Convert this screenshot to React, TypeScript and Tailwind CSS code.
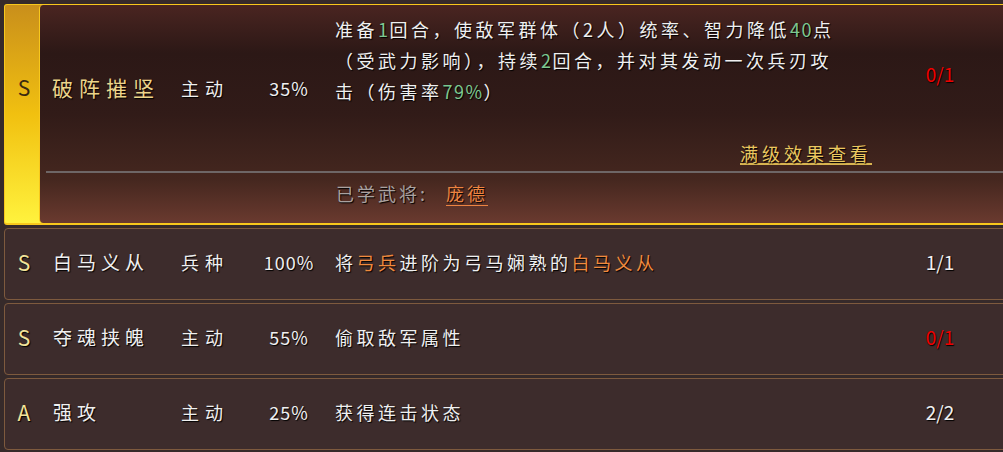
import React from "react";

const F = { fontFamily: '"Noto Sans CJK SC", "Noto Sans", sans-serif' };

const G = ({ children }: { children: React.ReactNode }) => (
  <span className="text-[#7cc890] tracking-[1.5px]">{children}</span>
);
const O = ({ children }: { children: React.ReactNode }) => (
  <span className="text-[#f08a3e]">{children}</span>
);

type Row = {
  grade: string;
  name: string;
  type: string;
  pct: string;
  desc: React.ReactNode;
  count: string;
  red: boolean;
};

const rows: Row[] = [
  {
    grade: "S",
    name: "白马义从",
    type: "兵种",
    pct: "100%",
    desc: (
      <>
        将<O>弓兵</O>进阶为弓马娴熟的<O>白马义从</O>
      </>
    ),
    count: "1/1",
    red: false,
  },
  { grade: "S", name: "夺魂挟魄", type: "主动", pct: "55%", desc: "偷取敌军属性", count: "0/1", red: true },
  { grade: "A", name: "强攻", type: "主动", pct: "25%", desc: "获得连击状态", count: "2/2", red: false },
];

const shadow = "[text-shadow:1px_1px_1px_#000]";

export default function App() {
  return (
    <div className="w-[1003px] h-[452px] overflow-hidden bg-[#362a2a]" style={F}>
      <div className="w-[1012px] pl-[4px] pt-[4px] flex flex-col gap-[3px]">
        {/* Highlighted card */}
        <div className="h-[221px] flex rounded-[3px] border border-b-2 border-[#f8c81c] bg-[linear-gradient(180deg,#c98f1b_0%,#f1c010_50%,#fff23d_100%)]">
          <div className="w-[34px] shrink-0 flex flex-col">
            <div className="h-[166px] flex items-center justify-center pl-[4px] text-[21px] text-[#3a2a10]">
              S
            </div>
          </div>
          <div className="flex-1 flex flex-col rounded-l-[4px] border-l border-[#f8c81c] bg-[linear-gradient(180deg,#4a2521_0%,#2c1816_22%,#311b18_50%,#45271f_80%,#6a3a2f_100%)]">
            <div className="h-[166px] flex">
              <div className={`w-[141px] shrink-0 flex items-center pl-[12px] text-[21px] tracking-[6px] text-[#ecd48a] ${shadow}`}>
                破阵摧坚
              </div>
              <div className={`w-[69px] shrink-0 flex items-center text-[18px] tracking-[6px] text-[#f0f0f0] ${shadow}`}>
                主动
              </div>
              <div className={`w-[78px] shrink-0 flex items-center justify-center text-[18px] tracking-[1px] text-[#f0f0f0] ${shadow}`}>
                35%
              </div>
              <div className="w-[560px] shrink-0 flex flex-col pl-[7px] pt-[9px]">
                <div className={`text-[18px] leading-[31px] tracking-[3.5px] text-[#f0f0f0] whitespace-nowrap ${shadow}`}>
                  <div>
                    准备<G>1</G>回合，使敌军群体（2人）统率、智力降低<G>40</G>点
                  </div>
                  <div>
                    （受武力影响），持续<G>2</G>回合，并对其发动一次兵刃攻
                  </div>
                  <div>
                    击（伤害率<G>79%</G>）
                  </div>
                </div>
                <div className="mt-auto mb-[6px] ml-[405px] self-start border-b-2 border-[#d8b450] text-[18px] leading-[20px] tracking-[4px] text-[#ebc860] whitespace-nowrap [text-shadow:1px_1px_1px_#000]">
                  满级效果查看
                </div>
              </div>
              <div className="w-[104px] shrink-0 pt-[59px] text-center text-[19px] leading-[20px] text-[#f00000] [text-shadow:1px_1px_1px_#000]">
                0/1
              </div>
            </div>
            <div className="ml-[6px] h-[2px] bg-[#6e6666]" />
            <div className="flex-1 flex items-center pl-[296px] pb-[9px] text-[18px]">
              <span className={`tracking-[3px] text-[#aaa2a0] ${shadow}`}>已学武将:</span>
              <span className={`ml-[18px] tracking-[3px] text-[#ec8442] border-b border-[#ec8442] leading-[23px] ${shadow}`}>
                庞德
              </span>
            </div>
          </div>
        </div>

        {rows.map((r, i) => (
          <div
            key={i}
            className="h-[72px] flex items-center pb-[3px] rounded-[4px] border border-[#7e5a3e] bg-[#3d2c2c]"
          >
            <div className={`w-[35px] shrink-0 text-center pl-[3px] text-[21px] text-[#f3e39a] ${shadow}`}>
              {r.grade}
            </div>
            <div className={`w-[141px] shrink-0 pl-[13px] text-[19px] tracking-[5px] text-[#f0f0f0] ${shadow}`}>
              {r.name}
            </div>
            <div className={`w-[69px] shrink-0 text-[18px] tracking-[6px] text-[#f0f0f0] ${shadow}`}>
              {r.type}
            </div>
            <div className={`w-[78px] shrink-0 text-center text-[18px] tracking-[1px] text-[#f0f0f0] ${shadow}`}>
              {r.pct}
            </div>
            <div className={`w-[560px] shrink-0 pl-[7px] text-[18px] tracking-[3.5px] text-[#f0f0f0] whitespace-nowrap ${shadow}`}>
              {r.desc}
            </div>
            <div
              className={`w-[104px] shrink-0 text-center text-[19px] ${
                r.red ? "text-[#f00000]" : "text-[#f0f0f0]"
              } ${shadow}`}
            >
              {r.count}
            </div>
          </div>
        ))}
      </div>
    </div>
  );
}
